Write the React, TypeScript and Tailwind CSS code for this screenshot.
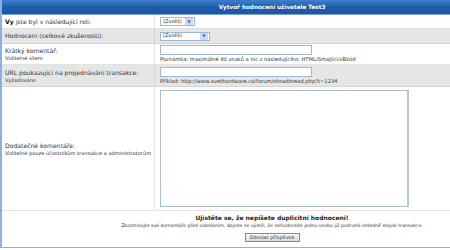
import React from "react";

const font = { fontFamily: '"DejaVu Sans", Verdana, sans-serif' };

function Select({ w }: { w: string }) {
  return (
    <div className={`flex h-[9px] ${w} items-center justify-between border border-[#9fb6d6] bg-white pl-[2px] pr-[1px]`}>
      <span className="text-[5.2px] leading-none text-[#333]">(Zvolit)</span>
      <span className="flex h-[7px] w-[8px] items-center justify-center bg-[#c9d9f1] text-[4px] leading-none text-[#3a5fa0]">▼</span>
    </div>
  );
}

export default function App() {
  return (
    <div className="h-[250px] w-[450px] overflow-hidden bg-white" style={font}>
      <div className="w-[542px] border-b border-l-2 border-[#8eb0dc] bg-white">
        <div className="flex h-[15px] items-center justify-center border-b border-[#7fa3d3] bg-gradient-to-b from-[#3f7fcc] via-[#1f5eac] to-[#1a56a3] text-[5.7px] font-bold text-white">
          Vytvoř hodnocení uživatele Test3
        </div>
        <div className="grid grid-cols-[153px_1fr] text-[6.1px] text-[#333]">
          <div className="flex h-[14px] items-center border-r border-b border-[#e2e2e2] bg-white pl-[3px]">
            <span><b className="text-[#111]">Vy</b> jste byl v následující roli:</span>
          </div>
          <div className="flex h-[14px] items-center border-b border-[#e2e2e2] bg-white pl-[5px]">
            <Select w="w-[35px]" />
          </div>
          <div className="flex h-[15px] items-center border-r border-b border-[#d4d4d4] bg-[#e6e6e6] pl-[3px]">
            Hodnocení (celkové zkušenosti):
          </div>
          <div className="flex h-[15px] items-center border-b border-[#d4d4d4] bg-[#e6e6e6] pl-[5px]">
            <Select w="w-[50px]" />
          </div>
          <div className="flex h-[21px] flex-col justify-center border-r border-b border-[#e2e2e2] bg-white pl-[3px] leading-[8px]">
            <span>Krátký komentář:</span>
            <span className="text-[5.1px] leading-[6px]">Viditelné všem</span>
          </div>
          <div className="flex h-[21px] flex-col justify-center border-b border-[#e2e2e2] bg-white pl-[5px]">
            <div className="h-[10px] w-[152px] border border-[#9fb6d6] bg-white" />
            <span className="mt-[2px] text-[5.2px] leading-none">Poznámka: maximálně 80 znaků a nic z následujícího: HTML/Smajlíci/vBkód</span>
          </div>
          <div className="flex h-[22px] flex-col justify-center border-r border-b border-[#d4d4d4] bg-[#e6e6e6] pl-[3px] leading-[8px]">
            <span>URL poukazující na projednávání transakce:</span>
            <span className="text-[5.1px] leading-[6px]">Vyžadováno</span>
          </div>
          <div className="flex h-[22px] flex-col justify-center border-b border-[#d4d4d4] bg-[#e6e6e6] pl-[5px]">
            <div className="h-[10px] w-[152px] border border-[#9fb6d6] bg-white" />
            <span className="mt-[2px] text-[5.2px] leading-none">Příklad: http://www.avethardware.ca/forum/showthread.php?t=1234</span>
          </div>
          <div className="flex h-[124px] flex-col justify-center border-r border-b border-[#e2e2e2] bg-white pl-[3px] leading-[8px]">
            <span>Dodatečné komentáře:</span>
            <span className="text-[5.1px] leading-[6px]">Viditelné pouze účastníkům transakce a administratorům</span>
          </div>
          <div className="flex h-[124px] items-center border-b border-[#e2e2e2] bg-white pl-[5px]">
            <div className="h-[117px] w-[249px] border border-[#a9bcd6] border-r-2 border-r-[#b8c6da] bg-white" />
          </div>
        </div>
        <div className="flex h-[36px] flex-col items-center pt-[3px] text-[#222]">
          <span className="text-[6px] font-bold leading-[8px]">Ujistěte se, že nepíšete duplicitní hodnocení!</span>
          <span className="text-[4.7px] leading-[8px] text-[#333]">Zkontrolujte své komentáře před odesláním, abyste se ujistili, že nehodnotíte jednu osobu již podruhé ohledně stejné transakce.</span>
          <div className="mt-[3px] flex h-[9px] w-[55px] items-center justify-center border border-[#7a8aa0] bg-gradient-to-b from-[#fafafa] to-[#dcdcdc] text-[5px] leading-none text-[#333]">
            Odeslat příspěvek
          </div>
        </div>
      </div>
    </div>
  );
}
